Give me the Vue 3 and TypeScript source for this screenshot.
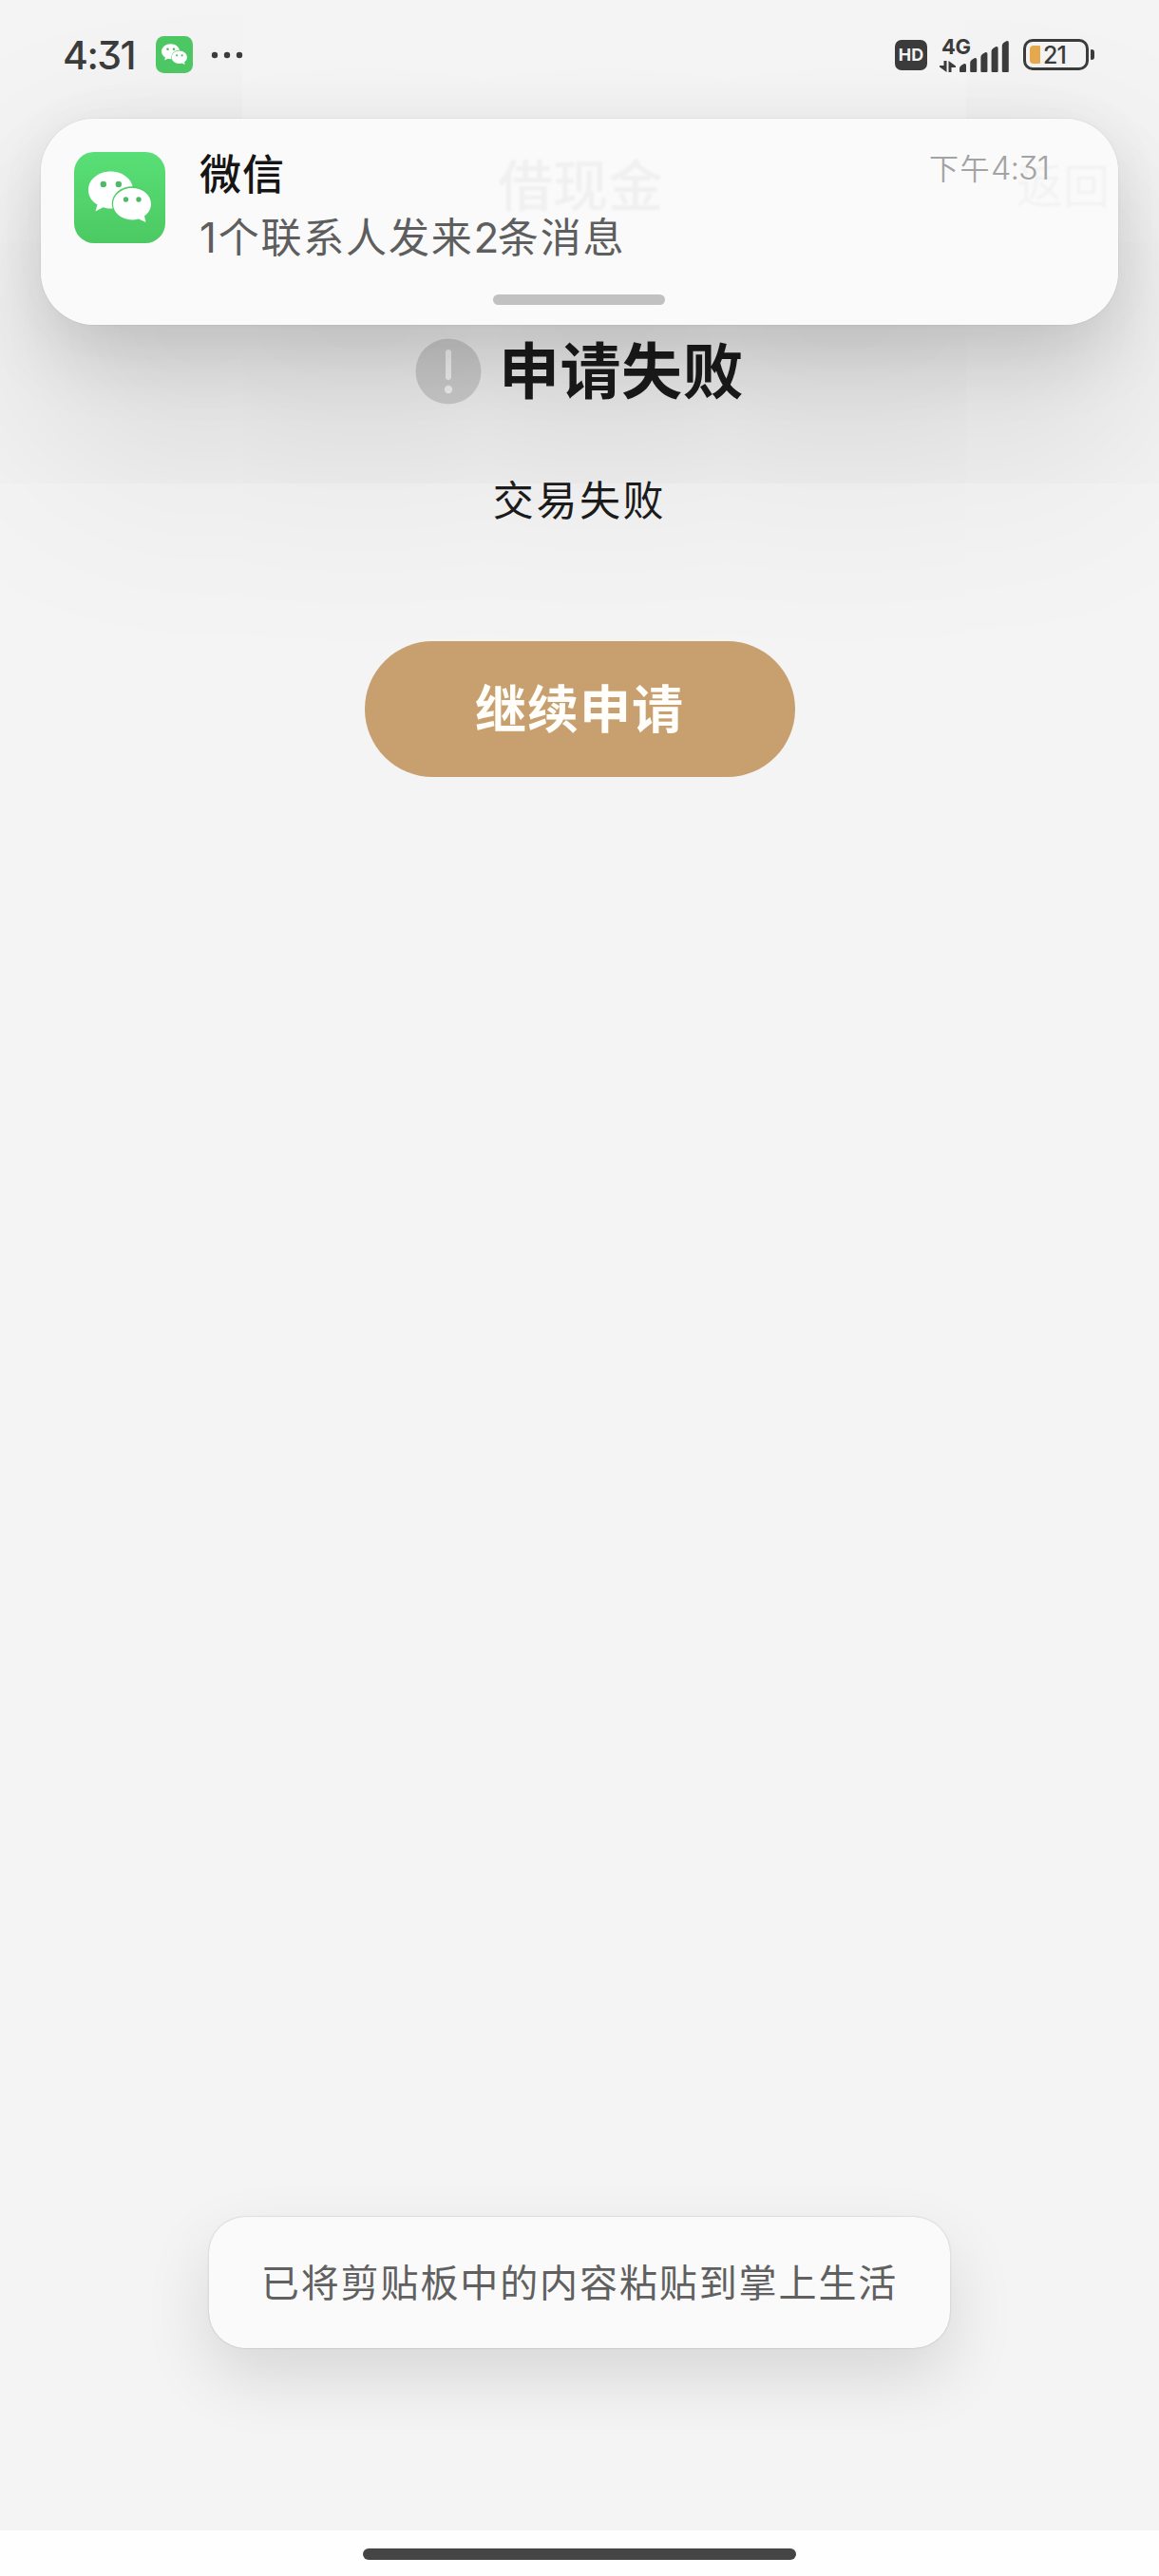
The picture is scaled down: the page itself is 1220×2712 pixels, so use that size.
<script setup lang="ts">
const signalBars: number[] = [8, 14, 20, 26, 32]
</script>

<template>
  <div class="screen">
    <header class="status">
      <span class="clock">4:31</span>
      <svg class="mini" viewBox="0 0 96 96">
        <rect width="96" height="96" rx="21" fill="#4cc764" />
        <use href="#bubbles" />
      </svg>
      <svg class="dots" viewBox="0 0 34 8" fill="#3b3b3b">
        <circle cx="4" cy="4" r="3.2" />
        <circle cx="17" cy="4" r="3.2" />
        <circle cx="30" cy="4" r="3.2" />
      </svg>
      <span class="hd">HD</span>
      <div class="network">
        <div class="net-type">
          <span class="gen">4G</span>
          <svg class="arrows" viewBox="0 0 17 12" fill="#3b3b3b">
            <path d="M4.500 0h3v12L0 6.500V5h4.500zM9.500 12V0L17 5.500V7h-4.500v5z" />
          </svg>
        </div>
        <svg class="bars" viewBox="0 0 52 34" fill="#3b3b3b">
          <path
            v-for="(h, i) in signalBars"
            :key="h"
            :d="`M${i * 11.2} 33v${-(h - 5)}q0-2 2-3.200l2.500-1.500q2.500-.8 2.500 1.500V33q0 1-1 1h-5q-1 0-1-1z`"
          />
        </svg>
      </div>
      <div class="battery">
        <i class="level"></i>
        <span class="percent">21</span>
      </div>
      <i class="nub"></i>
    </header>

    <nav class="nav">
      <span class="nav-title">借现金</span>
      <span class="nav-back">返回</span>
    </nav>

    <main class="result">
      <div class="headline">
        <svg class="alert" viewBox="0 0 70 70">
          <circle cx="35" cy="35" r="34.500" fill="#d2d2d2" />
          <path d="M35 15v26" stroke="#f8f8f8" stroke-width="6" stroke-linecap="round" />
          <circle cx="35" cy="54" r="4.200" fill="#f8f8f8" />
        </svg>
        <h1>申请失败</h1>
      </div>
      <p class="reason">交易失败</p>
      <button class="again" type="button">继续申请</button>
    </main>

    <footer class="gesture"><i class="home"></i></footer>

    <section class="notice">
      <svg class="app-icon" viewBox="0 0 96 96">
        <defs>
          <linearGradient id="green" x1="0" y1="0" x2="0" y2="1">
            <stop offset="0" stop-color="#59df77" />
            <stop offset="1" stop-color="#4cc962" />
          </linearGradient>
          <g id="bubbles">
            <path
              fill="#fff"
              d="M38.500 20.500c13 0 23.500 8.500 23.500 19.500S51.500 59.500 38.500 59.500c-3 0-5.500-.4-8-1.200L22.500 62.500l2-7C18.500 52 15 46.500 15 40c0-11 10.500-19.500 23.500-19.500z"
            />
            <ellipse cx="61" cy="54.500" rx="21.300" ry="18.300" fill="#4fcf68" />
            <path
              fill="#fff"
              d="M61 38c11.300 0 20 7.200 20 16.800 0 5.200-2.800 9.700-7 12.600l1.500 6.600-7.500-3.600c-2.300.7-4.600 1-7 1-11.300 0-20-7.400-20-16.600S49.700 38 61 38z"
            />
            <g fill="#4fb968">
              <circle cx="30.800" cy="34" r="3.200" />
              <circle cx="46.800" cy="34" r="3.200" />
              <circle cx="54.500" cy="50" r="2.700" />
              <circle cx="68" cy="50" r="2.700" />
            </g>
          </g>
        </defs>
        <rect width="96" height="96" rx="21" fill="url(#green)" />
        <use href="#bubbles" />
      </svg>
      <div class="notice-text">
        <strong class="sender">微信</strong>
        <span class="message"><b class="num">1</b>个联系人发来<b class="num two">2</b>条消息</span>
      </div>
      <time class="when">下午<span class="when-num">4:31</span></time>
      <i class="handle"></i>
    </section>

    <div class="toast">已将剪贴板中的内容粘贴到掌上生活</div>
  </div>
</template>

<style>
body {
  margin: 0;
}
</style>

<style scoped>
.screen {
  position: relative;
  display: flex;
  flex-direction: column;
  width: 1220px;
  height: 2712px;
  overflow: hidden;
  background: #f4f4f4;
  font-family: "Noto Sans CJK SC", sans-serif;
  color: #1c1c1c;
}
.status {
  position: relative;
  z-index: 3;
  display: flex;
  align-items: center;
  box-sizing: border-box;
  height: 115px;
  padding-left: 66px;
  color: #3b3b3b;
  font-family: Inter, sans-serif;
}
.clock {
  width: 98px;
  font-size: 41px;
  font-weight: 500;
  letter-spacing: -1.500px;
  line-height: 50px;
  font-feature-settings: "cv09";
  white-space: nowrap;
}
.mini {
  width: 39px;
  height: 39px;
}
.dots {
  width: 34px;
  height: 8px;
  margin-left: 19px;
}
.hd {
  width: 34px;
  height: 32px;
  margin-left: 686px;
  border-radius: 7px;
  background: #3b3b3b;
  color: #f4f4f4;
  font-size: 18px;
  font-weight: 700;
  line-height: 32px;
  text-align: center;
}
.network {
  display: flex;
  align-items: flex-end;
  height: 36px;
  margin-left: 13px;
}
.net-type {
  display: flex;
  flex-direction: column;
  width: 21px;
  height: 36px;
}
.gen {
  margin-left: 2px;
  font-size: 22px;
  font-weight: 700;
  line-height: 18px;
  letter-spacing: -0.5px;
  white-space: nowrap;
}
.arrows {
  width: 17px;
  height: 12px;
  margin-top: 6px;
}
.bars {
  width: 52px;
  height: 34px;
}
.battery {
  display: flex;
  align-items: center;
  box-sizing: border-box;
  width: 69px;
  height: 33px;
  margin-left: 15px;
  padding-left: 4px;
  border: 3.500px solid #3b3b3b;
  border-radius: 10px;
}
.level {
  width: 11px;
  height: 19px;
  border-radius: 4px 1px 1px 4px;
  background: #e5a84c;
}
.percent {
  margin-left: 3px;
  font-size: 25px;
  font-weight: 500;
  letter-spacing: -1px;
  line-height: 26px;
}
.nub {
  width: 4px;
  height: 11px;
  margin-left: 2px;
  border-radius: 1px 3px 3px 1px;
  background: #3b3b3b;
}
.nav {
  display: flex;
  justify-content: flex-end;
  align-items: center;
  height: 154px;
  margin-bottom: 6px;
  padding-right: 50px;
  filter: blur(1px);
}
.nav-title {
  width: 546px;
  color: #444;
  font-size: 58px;
  font-weight: 500;
}
.nav-back {
  width: 100px;
  color: #666;
  font-size: 49px;
  font-weight: 350;
  white-space: nowrap;
}
.result {
  flex: 1;
  display: flex;
  flex-direction: column;
  align-items: center;
  padding-top: 72px;
}
.headline {
  display: flex;
  align-items: center;
  gap: 18px;
  height: 88px;
  margin-bottom: 2px;
}
.alert {
  width: 70px;
  height: 70px;
}
h1 {
  margin: -10px 0 0;
  font-size: 64px;
  font-weight: 700;
  letter-spacing: 0.5px;
  line-height: 90px;
}
.reason {
  margin: 57px 0 0;
  font-size: 43px;
  font-weight: 400;
  letter-spacing: 2.600px;
  line-height: 60px;
}
.again {
  width: 453px;
  height: 143px;
  margin-top: 121px;
  padding: 0 0 5px;
  border: 0;
  border-radius: 72px;
  background: #c8a06f;
  color: #fffefa;
  font-family: inherit;
  font-size: 54px;
  font-weight: 700;
  letter-spacing: 1px;
  line-height: 138px;
}
.gesture {
  display: flex;
  justify-content: center;
  height: 48px;
  background: #fefefe;
}
.home {
  width: 456px;
  height: 12px;
  margin-top: 19px;
  border-radius: 6px;
  background: #454545;
}
.notice {
  position: absolute;
  z-index: 2;
  top: 125px;
  left: 43px;
  display: flex;
  box-sizing: border-box;
  width: 1134px;
  height: 217px;
  padding: 35px 0 0 35px;
  border-radius: 56px;
  background: rgba(250, 250, 250, 0.95);
  box-shadow: 0 0 2px rgba(0, 0, 0, 0.12), 0 0 60px rgba(0, 0, 0, 0.035), 0 34px 75px rgba(0, 0, 0, 0.12),
    0 110px 240px rgba(0, 0, 0, 0.155);
}
.app-icon {
  width: 96px;
  height: 96px;
}
.notice-text {
  display: flex;
  flex-direction: column;
  width: 620px;
  margin-left: 36px;
}
.sender {
  margin-top: -12px;
  color: #151515;
  font-size: 44px;
  font-weight: 500;
  letter-spacing: 1px;
  line-height: 66px;
}
.message {
  color: #5e5e5e;
  font-size: 43px;
  letter-spacing: 1.800px;
  line-height: 66px;
  white-space: nowrap;
}
.num {
  font-family: Inter, sans-serif;
  font-size: 44px;
  font-weight: 400;
  line-height: 1;
}
.two {
  letter-spacing: -1.500px;
}
.when {
  margin-left: 148px;
  margin-top: -1px;
  color: #a3a3a3;
  font-size: 31px;
  font-weight: 350;
  letter-spacing: 1.500px;
  line-height: 34px;
  white-space: nowrap;
}
.when-num {
  font-family: Inter, sans-serif;
  font-size: 34px;
  letter-spacing: -1px;
  line-height: 1;
  font-feature-settings: "cv09";
}
.handle {
  position: absolute;
  left: 476px;
  bottom: 21px;
  width: 181px;
  height: 11px;
  border-radius: 6px;
  background: #c1c1c1;
}
.toast {
  position: absolute;
  z-index: 2;
  top: 2334px;
  left: 220px;
  box-sizing: border-box;
  width: 780px;
  height: 138px;
  border-radius: 38px;
  background: #fafafa;
  box-shadow: 0 0 2px rgba(0, 0, 0, 0.22), 0 30px 70px rgba(0, 0, 0, 0.12);
  color: #606060;
  font-size: 40px;
  letter-spacing: 1.900px;
  line-height: 134px;
  text-align: center;
  white-space: nowrap;
}
</style>
